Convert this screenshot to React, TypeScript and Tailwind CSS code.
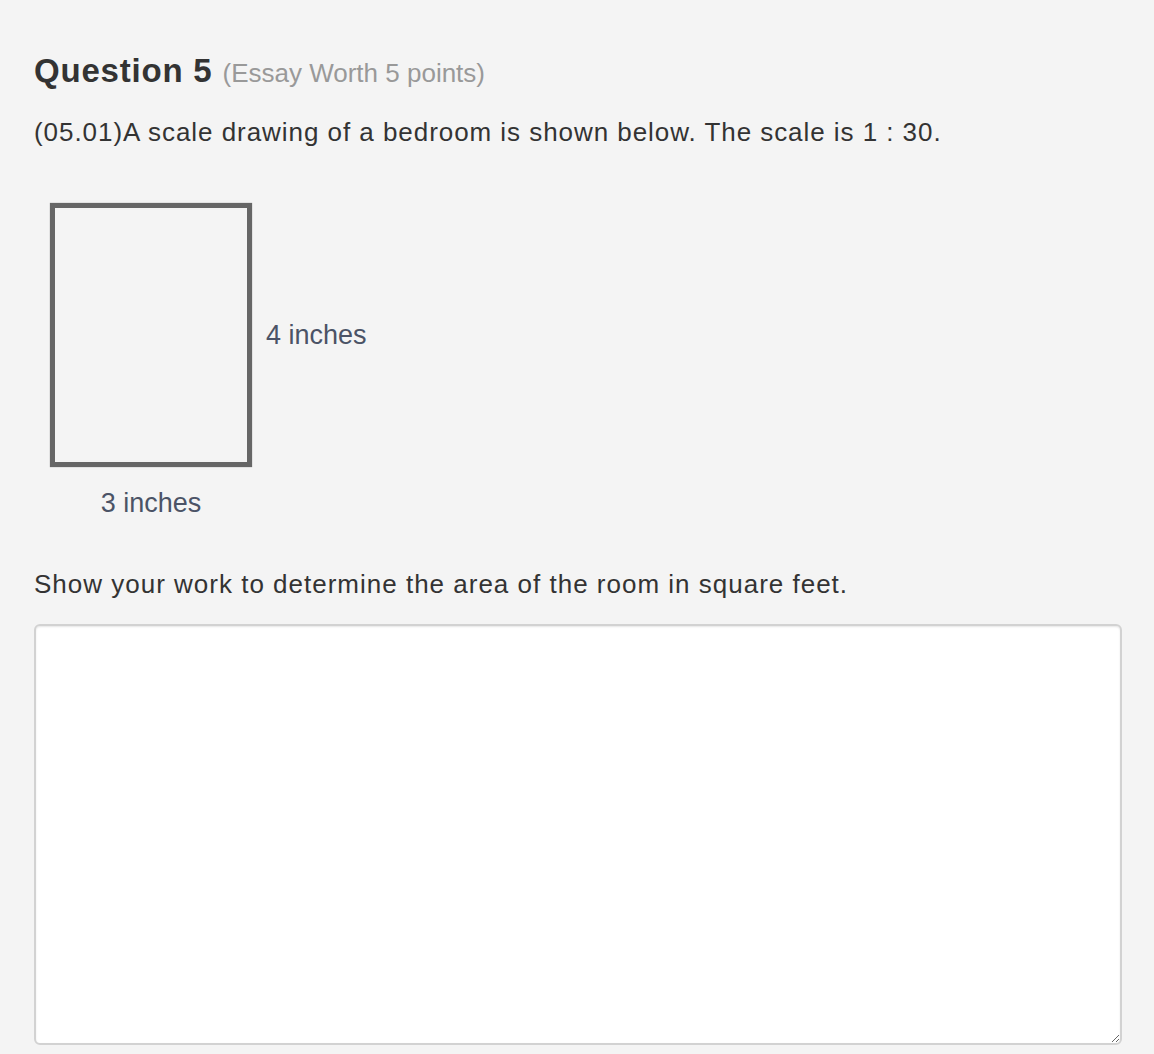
export default function App() {
  return (
    <div className="min-h-[1054px] bg-[#f4f4f4] pl-[34px] pr-[32px] pt-[51px] pb-[10px] font-['Liberation_Sans',Arial,sans-serif] text-[#333]">
      <h1 className="text-[33px] leading-[40px] font-bold tracking-[0.8px]">
        Question 5{' '}
        <span className="text-[26px] font-normal tracking-normal text-[#999]">(Essay Worth 5 points)</span>
      </h1>
      <p className="mt-[23px] text-[26px] leading-[32px] tracking-[0.95px]">
        (05.01)A scale drawing of a bedroom is shown below. The scale is 1 : 30.
      </p>

      {/* scale drawing */}
      <div className="mt-[55px] ml-[16px] flex w-fit flex-col items-start">
        <div className="flex items-center">
          <div className="w-[202px] h-[264px] border-[5px] border-[#666] shadow-[0_0_1px_#888]" />
          <span className="ml-[14px] text-[27px] leading-[32px] text-[#4b5366]">4 inches</span>
        </div>
        <div className="w-[202px] mt-[20px] text-center text-[27px] leading-[32px] text-[#4b5366]">
          3 inches
        </div>
      </div>

      <p className="mt-[49px] text-[26px] leading-[32px] tracking-[1px]">
        Show your work to determine the area of the room in square feet.
      </p>
      <textarea
        className="mt-[24px] block w-full h-[421px] bg-white border-2 border-[#d2d2d2] rounded-[6px] shadow-[inset_0_1px_2px_rgba(0,0,0,0.1)] outline-none resize"
      />
    </div>
  );
}
